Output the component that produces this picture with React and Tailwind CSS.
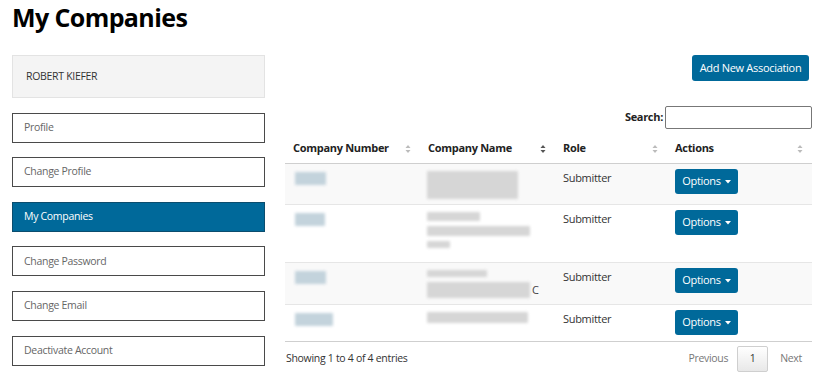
import React from 'react';

const NAV = [
    { label: 'Profile' },
    { label: 'Change Profile' },
    { label: 'My Companies', active: true },
    { label: 'Change Password' },
    { label: 'Change Email' },
    { label: 'Deactivate Account' },
];

const ROWS = [
    { h: 'h-[41px]', striped: true, num: [31], name: [[91, 28]] },
    { h: 'h-[58px]', num: [30], name: [[53, 9], [103, 10], [23, 7]] },
    { h: 'h-[42px]', striped: true, num: [31], name: [[60, 7], [103, 16]], tail: 'C' },
    { h: 'h-[36px]', num: [38], name: [[101, 11]] },
];

const SortIcon = ({ dark }) => (
    <svg width="6" height="10" viewBox="0 0 6 10" className={dark ? 'text-[#555]' : 'text-[#bbb]'}>
        <path d="M3 1 L5.5 4 L0.5 4 Z" fill="currentColor" />
        <path d="M3 9 L5.5 6 L0.5 6 Z" fill="currentColor" />
    </svg>
);

const Th = ({ children, w, dark }) => (
    <div className={`${w} flex items-center justify-between pl-2 pr-[9px] h-[25px] font-bold text-[11px] tracking-[-0.3px] text-[#222]`}>
        <span>{children}</span>
        <SortIcon dark={dark} />
    </div>
);

const Blur = ({ w, h, tone = 'gray' }) => (
    <div
        className={`${tone === 'blue' ? 'bg-[#c3d3dc]' : 'bg-[#d6d6d6]'} blur-[1.5px] rounded-[1px]`}
        style={{ width: w, height: h }}
    />
);

export default function App() {
    return (
        <div className="w-[830px] h-[380px] bg-white overflow-hidden text-[11px] tracking-[-0.3px] text-[#333]" style={{ fontFamily: '"Open Sans", "Noto Sans", sans-serif' }}>
            <h1 className="pl-[12px] pt-[1px] text-[25px] leading-[32px] font-bold text-black tracking-[-0.6px]">My Companies</h1>

            <div className="flex gap-[20px] pl-[12px] mt-[22px]">
                {/* Sidebar */}
                <div className="w-[253px] flex flex-col gap-[14.6px] text-[10.5px]">
                    <div className="h-[43px] bg-[#f4f4f4] border border-[#e3e3e3] flex items-center pl-[13px] text-[#333]">
                        ROBERT KIEFER
                    </div>
                    {NAV.map((n) => (
                        <div
                            key={n.label}
                            className={`h-[30px] flex items-center pl-[11px] border ${n.active
                                ? 'bg-[#00699a] border-[#0b4d6e] text-white'
                                : 'bg-white border-[#4a4a4a] text-[#666]'
                                }`}
                        >
                            {n.label}
                        </div>
                    ))}
                </div>

                {/* Content */}
                <div className="w-[527px] flex flex-col">
                    <div className="flex justify-end pr-[3px]">
                        <button className="h-[26px] w-[117px] bg-[#00699a] text-white text-[11px] tracking-[-0.3px] rounded-[3px]">
                            Add New Association
                        </button>
                    </div>

                    <div className="flex justify-end items-center mt-[25px] gap-[2px]">
                        <span className="font-bold text-[#222]">Search:</span>
                        <div className="w-[147px] h-[23px] border border-[#777] rounded-[2px]" />
                    </div>

                    <div className="mt-[7px] flex border-b border-[#cfcfcf] pb-[2px]">
                        <Th w="w-[135px]">Company Number</Th>
                        <Th w="w-[135px]" dark>Company Name</Th>
                        <Th w="w-[112px]">Role</Th>
                        <Th w="w-[145px]">Actions</Th>
                    </div>

                    {ROWS.map((r, i) => (
                        <div key={i} className={`${r.h} flex ${r.striped ? 'bg-[#f9f9f9]' : 'bg-white'} ${i < ROWS.length - 1 ? 'border-b border-[#e6e6e6]' : ''}`}>
                            <div className="w-[135px] pl-[10px] pt-[8px]">
                                <Blur w={r.num[0]} h={13} tone="blue" />
                            </div>
                            <div className="w-[135px] pl-[7px] pt-[7px] flex flex-col gap-[5px] relative">
                                {r.name.map(([w, h], j) => (
                                    <Blur key={j} w={w} h={h} />
                                ))}
                                {r.tail && <span className="absolute left-[112px] top-[19px] text-[#444]">{r.tail}</span>}
                            </div>
                            <div className="w-[112px] pl-[8px] pt-[7px] leading-[14px]">Submitter</div>
                            <div className="w-[145px] pl-[8px] pt-[5px]">
                                <button className="h-[25px] w-[63px] bg-[#00699a] text-white text-[11px] tracking-[-0.3px] rounded-[3px] flex items-center justify-center gap-[4px]">
                                    Options
                                    <svg width="6" height="4" viewBox="0 0 6 4"><path d="M0 0 L6 0 L3 3.5 Z" fill="white" /></svg>
                                </button>
                            </div>
                        </div>
                    ))}

                    <div className="border-t border-[#cfcfcf] flex items-center justify-between pt-[4px] text-[10.5px]">
                        <span className="pl-[1px] text-[#333]">Showing 1 to 4 of 4 entries</span>
                        <div className="flex items-center text-[#777]">
                            <span className="pr-[9px]">Previous</span>
                            <span className="w-[31px] h-[26px] flex items-center justify-center border border-[#cfcfcf] bg-gradient-to-b from-white to-[#e8e8e8] rounded-[2px] text-[#333]">1</span>
                            <span className="pl-[12px] pr-[10px]">Next</span>
                        </div>
                    </div>
                </div>
            </div>
        </div>
    );
}
